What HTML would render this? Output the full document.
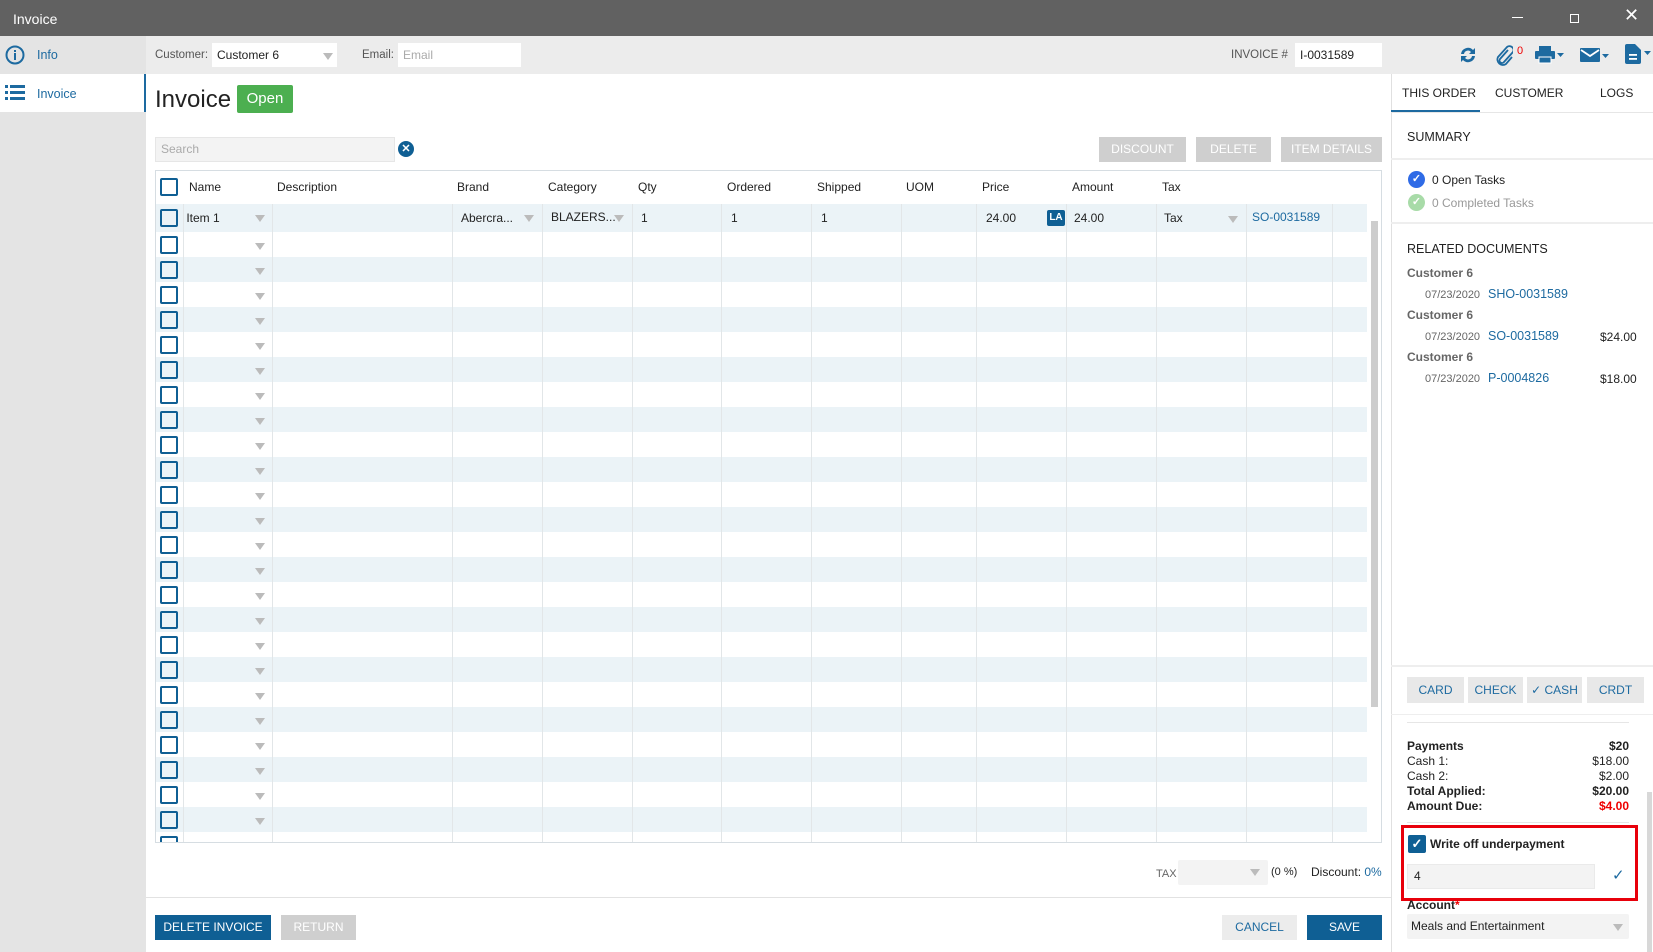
<!DOCTYPE html>
<html><head><meta charset="utf-8"><style>
*{box-sizing:border-box;margin:0;padding:0}
body{width:1653px;height:952px;position:relative;overflow:hidden;background:#fff;font-family:"Liberation Sans",sans-serif;font-size:12px;color:#222}
.a{position:absolute}
.title{left:0;top:0;width:1653px;height:36px;background:#616161;color:#fff;font-size:14px;line-height:38px;padding-left:13px}
.side{left:0;top:36px;width:146px;height:916px;background:#e4e4e4}
.hdr{left:146px;top:36px;width:1245px;height:38px;background:#ececec}
.rp{left:1391px;top:36px;width:262px;height:916px;background:#fff;border-left:1px solid #e0e0e0}
.rph{left:1391px;top:36px;width:262px;height:38px;background:#ececec}
.lbl{color:#555;font-size:11.5px}
.inp{background:#fff;height:24px;line-height:24px;padding-left:5px;font-size:12px}
.tri{width:0;height:0;border-left:5px solid transparent;border-right:5px solid transparent;border-top:7px solid #bbb}
.gbtn{background:#cfcfcf;color:#fff;text-align:center;line-height:25px;font-size:12px}
.tbl{left:155px;top:170px;width:1227px;height:673px;border:1px solid #d6dde2;overflow:hidden}
.rows{left:0;top:61px;width:1211px;height:612px;background:repeating-linear-gradient(#fff 0 25px,#ebf3f7 25px 50px)}
.vl{position:absolute;top:33px;width:1px;height:640px;background:#e2e6e8}
.cb{position:absolute;width:18px;height:18px;border:2px solid #0f5f94;border-radius:2px;left:-148px}
.h{position:absolute;top:9px;font-size:12px;color:#222}
.pb{background:#e8e8e8;color:#1d6aa0;text-align:center;line-height:26px;font-size:12px;top:677px;height:26px}
.bold{font-weight:bold}
.lnk{color:#1d6aa0}
</style></head><body>
<div class="a title">Invoice</div>
<div class="a" style="left:1512px;top:17px;width:11px;height:1px;background:#fff"></div>
<div class="a" style="left:1570px;top:14px;width:9px;height:9px;border:1px solid #fff"></div>
<div class="a" style="left:1624px;top:5px;color:#fff;font-size:18px">✕</div>

<div class="a side"></div>
<div class="a" style="left:0;top:36px;width:146px;height:38px">
<svg class="a" style="left:5px;top:9px" width="20" height="20"><circle cx="10" cy="10" r="8.5" fill="none" stroke="#1d6aa0" stroke-width="2"/><rect x="9" y="8" width="2" height="7" fill="#1d6aa0"/><rect x="9" y="5" width="2" height="2" fill="#1d6aa0"/></svg>
<div class="a" style="left:37px;top:12px;color:#1d6aa0;font-size:12.5px">Info</div></div>
<div class="a" style="left:0;top:74px;width:146px;height:38px;background:#fff;border-right:2px solid #1d6aa0">
<svg class="a" style="left:5px;top:10px" width="20" height="18"><g fill="#1d6aa0"><rect x="0" y="1" width="3" height="3"/><rect x="5" y="1" width="15" height="3"/><rect x="0" y="7" width="3" height="3"/><rect x="5" y="7" width="15" height="3"/><rect x="0" y="13" width="3" height="3"/><rect x="5" y="13" width="15" height="3"/></g></svg>
<div class="a" style="left:37px;top:13px;color:#1d6aa0;font-size:12.5px">Invoice</div></div>

<div class="a hdr"></div>
<div class="a lbl" style="left:155px;top:49px">Customer:</div>
<div class="a inp" style="left:212px;top:43px;width:125px">Customer 6</div>
<div class="a tri" style="left:323px;top:53px"></div>
<div class="a lbl" style="left:362px;top:49px">Email:</div>
<div class="a inp" style="left:398px;top:43px;width:123px;color:#aaa">Email</div>
<div class="a lbl" style="left:1231px;top:49px">INVOICE #</div>
<div class="a inp" style="left:1295px;top:43px;width:87px">I-0031589</div>

<div class="a" style="left:155px;top:86px;font-size:24px;color:#222">Invoice</div>
<div class="a" style="left:237px;top:85px;width:56px;height:28px;background:#4caf50;border-radius:2px;color:#fff;font-size:15px;line-height:28px;text-align:center">Open</div>

<div class="a" style="left:155px;top:137px;width:240px;height:25px;background:#f3f3f3;border:1px solid #e6e6e6;color:#aaa;line-height:23px;padding-left:5px">Search</div>
<div class="a" style="left:398px;top:141px;width:16px;height:16px;border-radius:50%;background:#0f5f94;color:#fff;font-size:11px;line-height:16px;text-align:center;font-weight:bold">✕</div>
<div class="a gbtn" style="left:1099px;top:137px;width:87px">DISCOUNT</div>
<div class="a gbtn" style="left:1196px;top:137px;width:75px">DELETE</div>
<div class="a gbtn" style="left:1281px;top:137px;width:101px">ITEM DETAILS</div>

<div class="a tbl">
<div class="a rows"></div>
<div class="a" style="left:0;top:33px;width:1211px;height:28px;background:#ebf3f7"></div>
<div class="vl" style="left:27px"></div><div class="vl" style="left:116px"></div><div class="vl" style="left:296px"></div><div class="vl" style="left:386px"></div><div class="vl" style="left:476px"></div><div class="vl" style="left:565px"></div><div class="vl" style="left:655px"></div><div class="vl" style="left:745px"></div><div class="vl" style="left:820px"></div><div class="vl" style="left:910px"></div><div class="vl" style="left:1000px"></div><div class="vl" style="left:1090px"></div><div class="vl" style="left:1176px"></div>
<div class="h" style="left:33px">Name</div><div class="h" style="left:121px">Description</div><div class="h" style="left:301px">Brand</div><div class="h" style="left:392px">Category</div><div class="h" style="left:482px">Qty</div><div class="h" style="left:571px">Ordered</div><div class="h" style="left:661px">Shipped</div><div class="h" style="left:750px">UOM</div><div class="h" style="left:826px">Price</div><div class="h" style="left:916px">Amount</div><div class="h" style="left:1006px">Tax</div>
<div class="a" style="left:0;top:0;width:27px;height:673px">
<i class="cb" style="left:4px;top:7px"></i>
<i class="cb" style="left:4px;top:38px"></i>
<i class="cb" style="left:4px;top:65px"></i><i class="cb" style="left:4px;top:90px"></i><i class="cb" style="left:4px;top:115px"></i><i class="cb" style="left:4px;top:140px"></i><i class="cb" style="left:4px;top:165px"></i><i class="cb" style="left:4px;top:190px"></i><i class="cb" style="left:4px;top:215px"></i><i class="cb" style="left:4px;top:240px"></i><i class="cb" style="left:4px;top:265px"></i><i class="cb" style="left:4px;top:290px"></i><i class="cb" style="left:4px;top:315px"></i><i class="cb" style="left:4px;top:340px"></i><i class="cb" style="left:4px;top:365px"></i><i class="cb" style="left:4px;top:390px"></i><i class="cb" style="left:4px;top:415px"></i><i class="cb" style="left:4px;top:440px"></i><i class="cb" style="left:4px;top:465px"></i><i class="cb" style="left:4px;top:490px"></i><i class="cb" style="left:4px;top:515px"></i><i class="cb" style="left:4px;top:540px"></i><i class="cb" style="left:4px;top:565px"></i><i class="cb" style="left:4px;top:590px"></i><i class="cb" style="left:4px;top:615px"></i><i class="cb" style="left:4px;top:640px"></i><i class="cb" style="left:4px;top:665px"></i>
</div>
<div class="a" style="left:99px;top:0;width:12px;height:673px">
<i class="a tri" style="top:44px"></i><i class="a tri" style="top:72px"></i><i class="a tri" style="top:97px"></i><i class="a tri" style="top:122px"></i><i class="a tri" style="top:147px"></i><i class="a tri" style="top:172px"></i><i class="a tri" style="top:197px"></i><i class="a tri" style="top:222px"></i><i class="a tri" style="top:247px"></i><i class="a tri" style="top:272px"></i><i class="a tri" style="top:297px"></i><i class="a tri" style="top:322px"></i><i class="a tri" style="top:347px"></i><i class="a tri" style="top:372px"></i><i class="a tri" style="top:397px"></i><i class="a tri" style="top:422px"></i><i class="a tri" style="top:447px"></i><i class="a tri" style="top:472px"></i><i class="a tri" style="top:497px"></i><i class="a tri" style="top:522px"></i><i class="a tri" style="top:547px"></i><i class="a tri" style="top:572px"></i><i class="a tri" style="top:597px"></i><i class="a tri" style="top:622px"></i><i class="a tri" style="top:647px"></i><i class="a tri" style="top:672px"></i>
</div>
<div class="h" style="left:27px;top:40px">&nbsp;Item 1</div>
<div class="h" style="left:305px;top:40px">Abercra...</div><i class="a tri" style="left:368px;top:44px"></i>
<div class="h" style="left:395px;top:39px">BLAZERS...</div><i class="a tri" style="left:458px;top:44px"></i>
<div class="h" style="left:485px;top:40px">1</div><div class="h" style="left:575px;top:40px">1</div><div class="h" style="left:665px;top:40px">1</div>
<div class="h" style="left:830px;top:40px">24.00</div>
<div class="a" style="left:891px;top:39px;width:18px;height:16px;background:#0f5f94;border-radius:2px;color:#fff;font-size:10px;font-weight:bold;text-align:center;line-height:16px">LA</div>
<div class="h" style="left:918px;top:40px">24.00</div>
<div class="h" style="left:1008px;top:40px">Tax</div><i class="a tri" style="left:1072px;top:45px"></i>
<div class="h lnk" style="left:1096px;top:39px">SO-0031589</div>
<div class="a" style="left:1211px;top:33px;width:16px;height:640px;background:#fff"></div>
<div class="a" style="left:1215px;top:50px;width:7px;height:486px;background:#cdcdcd"></div>
</div>

<div class="a" style="left:1156px;top:868px;color:#666;font-size:11px">TAX</div>
<div class="a" style="left:1178px;top:860px;width:90px;height:25px;background:#f3f3f3;border-radius:2px"></div>
<div class="a tri" style="left:1250px;top:869px"></div>
<div class="a" style="left:1271px;top:866px;font-size:11px">(0 %)</div>
<div class="a" style="left:1311px;top:865px">Discount: <span class="lnk">0%</span></div>
<div class="a" style="left:146px;top:897px;width:1245px;height:1px;background:#e2e2e2"></div>
<div class="a" style="left:155px;top:915px;width:116px;height:25px;background:#0f5f94;color:#fff;text-align:center;line-height:25px">DELETE INVOICE</div>
<div class="a gbtn" style="left:281px;top:915px;width:75px">RETURN</div>
<div class="a" style="left:1222px;top:915px;width:75px;height:25px;background:#ececec;color:#1d6aa0;text-align:center;line-height:25px">CANCEL</div>
<div class="a" style="left:1307px;top:915px;width:75px;height:25px;background:#0f5f94;color:#fff;text-align:center;line-height:25px">SAVE</div>

<div class="a rp"></div>
<div class="a rph"></div>
<svg class="a" style="left:1458px;top:46px" width="20" height="18"><path d="M3 8a7 7 0 0 1 12-4l2-2v6h-6l2-2a4 4 0 0 0-7 2z M17 10a7 7 0 0 1-12 4l-2 2v-6h6l-2 2a4 4 0 0 0 7-2z" fill="#1d6aa0"/></svg>
<svg class="a" style="left:1495px;top:44px" width="18" height="22"><path d="M13 6 5 15a2.5 2.5 0 0 0 4 3l9-10a4 4 0 0 0-6-5L3 13a5.5 5.5 0 0 0 8 7l6-7" fill="none" stroke="#1d6aa0" stroke-width="1.8"/></svg>
<div class="a" style="left:1517px;top:45px;color:#e00;font-size:11px">0</div>
<svg class="a" style="left:1535px;top:46px" width="30" height="18"><rect x="4" y="0" width="12" height="5" fill="#1d6aa0"/><rect x="0" y="5" width="20" height="8" rx="1" fill="#1d6aa0"/><rect x="4" y="11" width="12" height="6" fill="#1d6aa0" stroke="#fff" stroke-width="1"/><path d="M22 7h7l-3.5 4z" fill="#1d6aa0"/></svg>
<svg class="a" style="left:1580px;top:47px" width="30" height="16"><rect x="0" y="1" width="20" height="14" rx="1" fill="#1d6aa0"/><path d="M1 3l9 6 9-6" fill="none" stroke="#fff" stroke-width="1.8"/><path d="M22 7h7l-3.5 4z" fill="#1d6aa0"/></svg>
<svg class="a" style="left:1625px;top:44px" width="28" height="20"><path d="M0 2a2 2 0 0 1 2-2h8l6 6v12a2 2 0 0 1-2 2H2a2 2 0 0 1-2-2z" fill="#1d6aa0"/><rect x="4" y="10" width="8" height="1.8" fill="#fff"/><rect x="4" y="14" width="8" height="1.8" fill="#fff"/><path d="M19 7h7l-3.5 4z" fill="#1d6aa0"/></svg>

<div class="a" style="left:1402px;top:86px;font-size:12px">THIS ORDER</div>
<div class="a" style="left:1495px;top:86px;font-size:12px">CUSTOMER</div>
<div class="a" style="left:1600px;top:86px;font-size:12px">LOGS</div>
<div class="a" style="left:1391px;top:110px;width:89px;height:2px;background:#1d6aa0"></div>
<div class="a" style="left:1391px;top:112px;width:262px;height:1px;background:#e6e6e6"></div>
<div class="a" style="left:1407px;top:130px;font-size:12.5px">SUMMARY</div>
<div class="a" style="left:1391px;top:158px;width:262px;height:2px;background:#eee"></div>
<div class="a" style="left:1408px;top:171px;width:17px;height:17px;border-radius:50%;background:#2f6be6;color:#fff;font-size:11px;text-align:center;line-height:17px;font-weight:bold">✓</div>
<div class="a" style="left:1432px;top:173px">0 Open Tasks</div>
<div class="a" style="left:1408px;top:194px;width:17px;height:17px;border-radius:50%;background:#a8dba8;color:#fff;font-size:11px;text-align:center;line-height:17px;font-weight:bold">✓</div>
<div class="a" style="left:1432px;top:196px;color:#999">0 Completed Tasks</div>
<div class="a" style="left:1391px;top:222px;width:262px;height:2px;background:#eee"></div>
<div class="a" style="left:1407px;top:242px;font-size:12.5px">RELATED DOCUMENTS</div>
<div class="a bold" style="left:1407px;top:266px;color:#666">Customer 6</div>
<div class="a" style="left:1425px;top:289px;color:#666;font-size:11px">07/23/2020</div><div class="a lnk" style="left:1488px;top:287px;font-size:12.5px">SHO-0031589</div>
<div class="a bold" style="left:1407px;top:308px;color:#666">Customer 6</div>
<div class="a" style="left:1425px;top:331px;color:#666;font-size:11px">07/23/2020</div><div class="a lnk" style="left:1488px;top:329px;font-size:12.5px">SO-0031589</div><div class="a" style="left:1600px;top:330px">$24.00</div>
<div class="a bold" style="left:1407px;top:350px;color:#666">Customer 6</div>
<div class="a" style="left:1425px;top:373px;color:#666;font-size:11px">07/23/2020</div><div class="a lnk" style="left:1488px;top:371px;font-size:12.5px">P-0004826</div><div class="a" style="left:1600px;top:372px">$18.00</div>

<div class="a" style="left:1391px;top:665px;width:262px;height:2px;background:#eee"></div>
<div class="a pb" style="left:1407px;width:57px">CARD</div>
<div class="a pb" style="left:1468px;width:55px">CHECK</div>
<div class="a pb" style="left:1527px;width:55px">✓ CASH</div>
<div class="a pb" style="left:1587px;width:57px">CRDT</div>
<div class="a" style="left:1391px;top:714px;width:262px;height:1px;background:#eee"></div>
<div class="a" style="left:1407px;top:722px;width:222px;height:1px;background:#e6e6e6"></div>
<div class="a" style="left:1407px;top:739px;width:222px;line-height:15px;font-size:12px">
<div class="bold">Payments<span style="float:right">$20</span></div>
<div>Cash 1:<span style="float:right">$18.00</span></div>
<div>Cash 2:<span style="float:right">$2.00</span></div>
<div class="bold">Total Applied:<span style="float:right">$20.00</span></div>
<div class="bold">Amount Due:<span style="float:right;color:#e00">$4.00</span></div>
</div>
<div class="a" style="left:1407px;top:822px;width:222px;height:1px;background:#e6e6e6"></div>
<div class="a" style="left:1647px;top:792px;width:5px;height:160px;background:#d8d8d8"></div>
<div class="a" style="left:1401px;top:825px;width:237px;height:76px;border:3px solid #e8000b"></div>
<div class="a" style="left:1408px;top:835px;width:18px;height:18px;background:#0f5f94;border-radius:2px;color:#fff;font-size:13px;text-align:center;line-height:18px;font-weight:bold">✓</div>
<div class="a bold" style="left:1430px;top:837px;font-size:12px">Write off underpayment</div>
<div class="a" style="left:1407px;top:864px;width:188px;height:25px;background:#f3f3f3;border:1px solid #eaeaea;padding-left:6px;line-height:23px">4</div>
<div class="a" style="left:1612px;top:866px;color:#1d6aa0;font-size:15px">✓</div>
<div class="a bold" style="left:1407px;top:898px;font-size:12px">Account<span style="color:#e00">*</span></div>
<div class="a" style="left:1407px;top:914px;width:222px;height:25px;background:#f3f3f3;border-radius:2px;padding-left:4px;line-height:25px">Meals and Entertainment</div>
<div class="a tri" style="left:1613px;top:924px"></div>
</body></html>
